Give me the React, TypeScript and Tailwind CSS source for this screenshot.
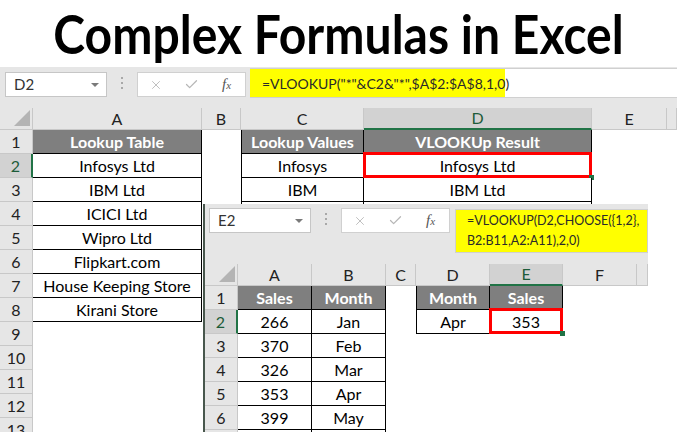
import { X, Check } from "lucide-react";

type Kind = "head" | "data" | "blank";

type CellSpec = {
  v?: string;
  k: Kind;
  left?: boolean;
  red?: boolean;
};

const h = (v: string, left = false): CellSpec => ({ v, k: "head", left });
const d = (v: string, left = false, red = false): CellSpec => ({ v, k: "data", left, red });
const b: CellSpec = { k: "blank" };

const topRows: CellSpec[][] = [
  [h("Lookup Table"), b, h("Lookup Values", true), h("VLOOKUp Result"), b, b],
  [d("Infosys Ltd"), b, d("Infosys", true), d("Infosys Ltd", false, true), b, b],
  [d("IBM Ltd"), b, d("IBM", true), d("IBM Ltd"), b, b],
  [d("ICICI Ltd"), b, d("", true), d(""), b, b],
  [d("Wipro Ltd"), b, b, b, b, b],
  [d("Flipkart.com"), b, b, b, b, b],
  [d("House Keeping Store"), b, b, b, b, b],
  [d("Kirani Store"), b, b, b, b, b],
  [b, b, b, b, b, b],
  [b, b, b, b, b, b],
  [b, b, b, b, b, b],
  [b, b, b, b, b, b],
  [b, b, b, b, b, b],
];

// last row only shows its top border at the bottom edge
const sales = [
  ["266", "Jan"],
  ["370", "Feb"],
  ["326", "Mar"],
  ["353", "Apr"],
  ["399", "May"],
  ["", ""],
];

const overlayRows: CellSpec[][] = [
  [h("Sales"), h("Month"), b, h("Month", true), h("Sales"), b, b],
  ...sales.map(([s, m], i) =>
    i === 0
      ? [d(s), d(m), b, d("Apr", true), d("353", false, true), b, b]
      : [d(s), d(m), b, b, b, b, b]
  ),
];

const Cell = ({ spec }: { spec: CellSpec }) => {
  if (spec.k === "blank") return <div className="bg-white" />;
  const base =
    spec.k === "head"
      ? "bg-[#7f7f7f] font-bold text-white"
      : "bg-white text-black";
  return (
    <div
      className={`relative flex items-center justify-center whitespace-nowrap border-r border-b border-black ${base} ${
        spec.left ? "border-l" : ""
      }`}
    >
      {spec.v}
      {spec.red && (
        <>
          <div className="absolute -top-[2px] -left-px -right-px -bottom-px border-[3px] border-[#ff0000]" />
          <div className="absolute -bottom-[3px] -right-[3px] h-[5px] w-[5px] bg-[#217346]" />
        </>
      )}
    </div>
  );
};

const ColHead = ({ label, active }: { label: string; active?: boolean }) => (
  <div
    className={`flex items-center justify-center border-r border-[#c8c8c8] ${
      active
        ? "border-b-2 border-b-[#217346] bg-[#d2d2d2] text-[#1d5c39]"
        : "border-b border-b-[#c8c8c8] bg-[#e6e6e6] text-[#222]"
    }`}
  >
    {label}
  </div>
);

const RowHead = ({ n, active }: { n: number; active?: boolean }) => (
  <div
    className={`flex items-center justify-center border-b border-[#c8c8c8] ${
      active
        ? "border-r-2 border-r-[#217346] bg-[#d2d2d2] text-[#1d5c39]"
        : "border-r border-r-[#c8c8c8] bg-[#e6e6e6] text-[#222]"
    }`}
  >
    {n}
  </div>
);

const Corner = () => (
  <div className="flex items-end justify-end border-r border-b border-[#c8c8c8] bg-[#e6e6e6] pr-[2px] pb-[3px]">
    <svg width="16" height="16" viewBox="0 0 16 16">
      <polygon points="16,0 16,16 0,16" fill="#b4b4b4" />
    </svg>
  </div>
);

const NameBox = ({ name }: { name: string }) => (
  <div className="flex h-[25px] w-[102px] items-center justify-between border border-[#c6c6c6] bg-white pr-[7px] pl-[8px] text-[15px] text-[#333]">
    <span>{name}</span>
    <span className="h-0 w-0 border-x-[4px] border-t-[4px] border-x-transparent border-t-[#7a7a7a]" />
  </div>
);

const Dots = () => (
  <div className="flex flex-col gap-[3px]">
    <span className="h-[2px] w-[2px] bg-[#a8a8a8]" />
    <span className="h-[2px] w-[2px] bg-[#a8a8a8]" />
    <span className="h-[2px] w-[2px] bg-[#a8a8a8]" />
  </div>
);

const Buttons = () => (
  <div className="flex h-[25px] w-[109px] items-center border border-[#d0d0d0] bg-white">
    <X className="ml-[11px] h-[14px] w-[14px] text-[#b7b7b7]" strokeWidth={1.5} />
    <Check className="ml-[21px] h-[15px] w-[15px] text-[#b7b7b7]" strokeWidth={2} />
    <span className="ml-[23px] font-['Liberation_Serif',serif] text-[15px] text-[#555] italic">
      f<span className="text-[11px]">x</span>
    </span>
  </div>
);

const App = () => {
  return (
    <div className="relative h-[432px] w-[677px] overflow-hidden bg-white font-['Lato',sans-serif] text-[16px]">
      <div className="flex h-[67px] items-center justify-center">
        <h1 className="scale-x-[0.89] text-[54px] leading-none font-bold whitespace-nowrap text-black">
          Complex Formulas in Excel
        </h1>
      </div>

      {/* main sheet */}
      <div className="h-[41px] bg-[#e6e6e6] pt-px">
        <div className="flex items-start">
          <div className="mt-[4px] ml-[5px]">
            <NameBox name="D2" />
          </div>
          <div className="mt-[9px] ml-[14px]">
            <Dots />
          </div>
          <div className="mt-[4px] ml-[14px]">
            <Buttons />
          </div>
          <div className="ml-[4px] flex h-[30px] flex-1 border-y border-[#d0d0d0] bg-white">
            <div className="flex w-[255px] items-center bg-[#ffff00] pl-[12px] text-[14px] text-[#2a2a2a]">
              =VLOOKUP("*"&C2&"*",$A$2:$A$8,1,0)
            </div>
          </div>
        </div>
      </div>
      <div className="grid grid-cols-[33px_169px_39px_123px_228px_75px_1fr] grid-rows-[22px_repeat(13,24px)]">
        <Corner />
        {["A", "B", "C", "D", "E", ""].map((c, i) => (
          <ColHead key={i} label={c} active={c === "D"} />
        ))}
        {topRows.map((row, i) => (
          <div key={i} className="contents">
            <RowHead n={i + 1} active={i === 1} />
            {row.map((c, j) => (
              <Cell key={j} spec={c} />
            ))}
          </div>
        ))}
      </div>

      {/* second screenshot laid over the first */}
      <div className="absolute top-[204px] left-[203px] h-[228px] w-[445px] overflow-hidden border-l-2 border-[#48574d] bg-white">
        <div className="flex h-[60px] items-start bg-[#e6e6e6]">
          <div className="mt-[4px] ml-[4px]">
            <NameBox name="E2" />
          </div>
          <div className="mt-[9px] ml-[14px]">
            <Dots />
          </div>
          <div className="mt-[4px] ml-[14px]">
            <Buttons />
          </div>
          <div className="mt-[5px] ml-[5px] flex h-[44px] flex-1 flex-col justify-center border border-[#d0d0d0] bg-[#ffff00] pl-[11px] text-[12.5px] leading-[20px] whitespace-nowrap text-[#2a2a2a]">
            <div>=VLOOKUP(D2,CHOOSE({"{"}1,2{"}"},</div>
            <div>B2:B11,A2:A11),2,0)</div>
          </div>
        </div>
        <div className="grid grid-cols-[33px_74px_74px_30px_74px_73px_74px_1fr] grid-rows-[22px_repeat(7,24px)]">
          <Corner />
          {["A", "B", "C", "D", "E", "F", ""].map((c, i) => (
            <ColHead key={i} label={c} active={c === "E"} />
          ))}
          {overlayRows.map((row, i) => (
            <div key={i} className="contents">
              <RowHead n={i + 1} active={i === 1} />
              {row.map((c, j) => (
                <Cell key={j} spec={c} />
              ))}
            </div>
          ))}
        </div>
      </div>
    </div>
  );
};

export default App;
